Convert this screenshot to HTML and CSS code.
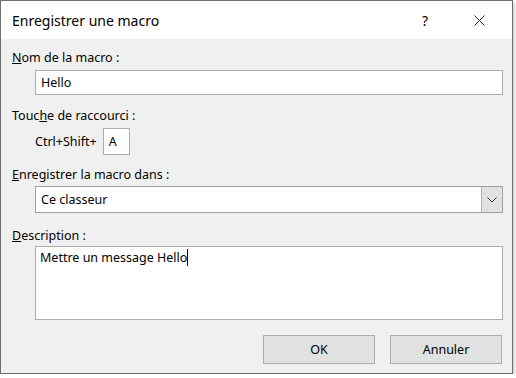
FILE: index.html
```html
<!DOCTYPE html>
<html>
<head>
  <meta charset="UTF-8" />
  <title>Enregistrer une macro</title>
  <link rel="stylesheet" href="styles.css">
</head>
<body>
  <div class="dialog">
    <!-- Title bar -->
    <div class="titlebar">
      <span class="title">Enregistrer une macro</span>
      <span class="help">?</span>
      <span class="close">
        <svg width="11" height="11" viewBox="0 0 11 11"><path d="M0.5 0.5 L10.5 10.5 M10.5 0.5 L0.5 10.5" stroke="#222" stroke-width="1" fill="none"/></svg>
      </span>
    </div>

    <div class="content">
      <div class="label"><u>N</u>om de la macro :</div>
      <div class="field input-name">Hello</div>

      <div class="label label-shortcut">Touc<u>h</u>e de raccourci :</div>
      <div class="shortcut-row">
        <span class="shortcut-text">Ctrl+Shift+</span>
        <span class="field key-box">A</span>
      </div>

      <div class="label label-store"><u>E</u>nregistrer la macro dans :</div>
      <div class="select">
        <span class="select-value">Ce classeur</span>
        <span class="select-btn">
          <svg width="10" height="6" viewBox="0 0 10 6"><path d="M0.5 0.5 L5 5 L9.5 0.5" stroke="#333" stroke-width="1" fill="none"/></svg>
        </span>
      </div>

      <div class="label label-desc"><u>D</u>escription :</div>
      <div class="field textarea">Mettre un message Hello<span class="caret"></span></div>

      <div class="buttons">
        <button class="btn">OK</button>
        <button class="btn">Annuler</button>
      </div>
    </div>
  </div>
</body>
</html>
```

FILE: styles.css
```css
body {
  margin: 0;
  background: #fff;
  font-family: "Noto Sans", "Open Sans", Arial, sans-serif;
  font-size: 12.5px;
  color: #000;
}
.dialog {
  width: 511px;
  height: 372px;
  border: 1px solid #6e6e6e;
  background: #f0f0f0;
  box-shadow: 1px 2px 4px rgba(0, 0, 0, 0.25);
  display: flex;
  flex-direction: column;
}
.titlebar {
  height: 38px;
  background: #fff;
  display: flex;
  align-items: center;
  padding-left: 11px;
}
.title {
  font-size: 14px;
  flex: 1;
  color: #000;
}
.help {
  font-size: 14px;
  width: 20px;
  text-align: center;
  margin-right: 39px;
}
.close {
  width: 11px;
  height: 11px;
  margin-right: 27px;
  display: flex;
}
.content {
  padding: 11px 0 0 11px;
}
.label {
  line-height: 16px;
  height: 16px;
}
.field {
  background: #fff;
  border: 1px solid #adadad;
  box-sizing: border-box;
}
.input-name {
  margin: 4px 0 0 23px;
  width: 468px;
  height: 25px;
  line-height: 23px;
  padding-left: 5px;
}
.label-shortcut {
  margin-top: 13px;
}
.shortcut-row {
  margin: 4px 0 0 23px;
  display: flex;
  align-items: center;
  gap: 6px;
}
.key-box {
  width: 27px;
  height: 27px;
  line-height: 25px;
  padding-left: 5px;
}
.label-store {
  margin-top: 12px;
}
.select {
  margin: 3px 0 0 23px;
  width: 468px;
  height: 27px;
  box-sizing: border-box;
  border: 1px solid #a0a0a0;
  background: #fff;
  display: flex;
}
.select-value {
  flex: 1;
  line-height: 25px;
  padding-left: 5px;
}
.select-btn {
  width: 20px;
  background: #e1e1e1;
  border-left: 1px solid #b4b4b4;
  display: flex;
  align-items: center;
  justify-content: center;
}
.label-desc {
  margin-top: 15px;
}
.textarea {
  margin: 2px 0 0 23px;
  width: 468px;
  height: 74px;
  padding: 2px 4px;
  line-height: 18px;
}
.caret {
  display: inline-block;
  width: 1px;
  height: 17px;
  background: #000;
  vertical-align: -4px;
}
.buttons {
  display: flex;
  justify-content: flex-end;
  gap: 15px;
  margin: 15px 10px 0 0;
}
.btn {
  width: 112px;
  height: 29px;
  background: #e1e1e1;
  border: 1px solid #adadad;
  font-family: inherit;
  font-size: 12.5px;
  color: #000;
  padding: 0;
}
```
